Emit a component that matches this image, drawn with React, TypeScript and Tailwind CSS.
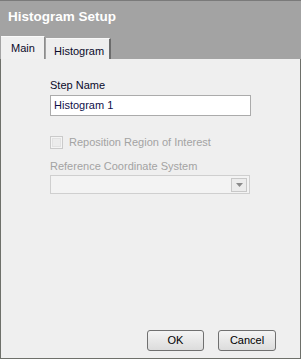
export default function App() {
  const font = { fontFamily: '"Liberation Sans", Arial, sans-serif' };
  return (
    <div
      className="w-[301px] h-[359px] flex flex-col bg-[#a3a3a3] text-[11px] leading-[13px]"
      style={font}
    >
      {/* header */}
      <div className="h-[59px] flex flex-col border-t border-[#7a7a7a]">
        <div className="pl-[8px] pt-[8px] text-[13.5px] leading-[16px] font-bold text-white">
          Histogram Setup
        </div>
        <div className="mt-auto flex items-end pl-[1px]">
          <div className="h-[23px] w-[44px] pl-[10px] pt-[5px] bg-[#f0f0f0] border-t border-[#fafafa] border-r border-r-[#8c8c8c] text-[#0a0a2a]">
            Main
          </div>
          <div className="h-[21px] w-[65px] ml-[1px] pl-[8px] pt-[6px] bg-[#eeeeee] border-t border-[#f8f8f8] border-r-2 border-r-[#6b6b6b] text-[#0a0a2a]">
            Histogram
          </div>
        </div>
      </div>

      {/* body */}
      <div className="flex-1 flex flex-col bg-[#efefef] border-l border-r border-b border-[#6e706a] pl-[49px]">
        <div className="pt-[20px] text-[#0a0a2a]">Step Name</div>
        <div className="mt-[3px] w-[201px] h-[21px] bg-white border border-[#ababab] pl-[3px] flex items-center text-[#10104a]">
          Histogram 1
        </div>

        <div className="mt-[20px] flex items-center gap-[6px] text-[#a3a3a3]">
          <div className="w-[13px] h-[13px] border border-[#cacaca] bg-[#f4f4f4] p-[1px]">
            <div className="w-full h-full bg-[#ececec] border border-[#e2e2e2]" />
          </div>
          <span>Reposition Region of Interest</span>
        </div>

        <div className="mt-[11px] text-[#a3a3a3]">Reference Coordinate System</div>
        <div className="mt-[2px] w-[200px] h-[19px] bg-[#f3f3f3] border border-[#cfcfcf] flex items-center justify-end pr-[2px]">
          <div className="w-[16px] h-[14px] border border-[#c8c8c8] bg-[#ececec] flex items-center justify-center">
            <svg width="7" height="4" viewBox="0 0 7 4">
              <path d="M0 0 H7 L3.5 4 Z" fill="#8a8a8a" />
            </svg>
          </div>
        </div>

        <div className="mt-auto mb-[7px] flex justify-end gap-[14px] pr-[24px]">
          <button className="w-[57px] h-[21px] rounded-[3px] border border-[#707070] bg-gradient-to-b from-[#f4f4f4] to-[#dcdcdc] text-black">
            OK
          </button>
          <button className="w-[58px] h-[21px] rounded-[3px] border border-[#707070] bg-gradient-to-b from-[#f4f4f4] to-[#dcdcdc] text-black">
            Cancel
          </button>
        </div>
      </div>
    </div>
  );
}
